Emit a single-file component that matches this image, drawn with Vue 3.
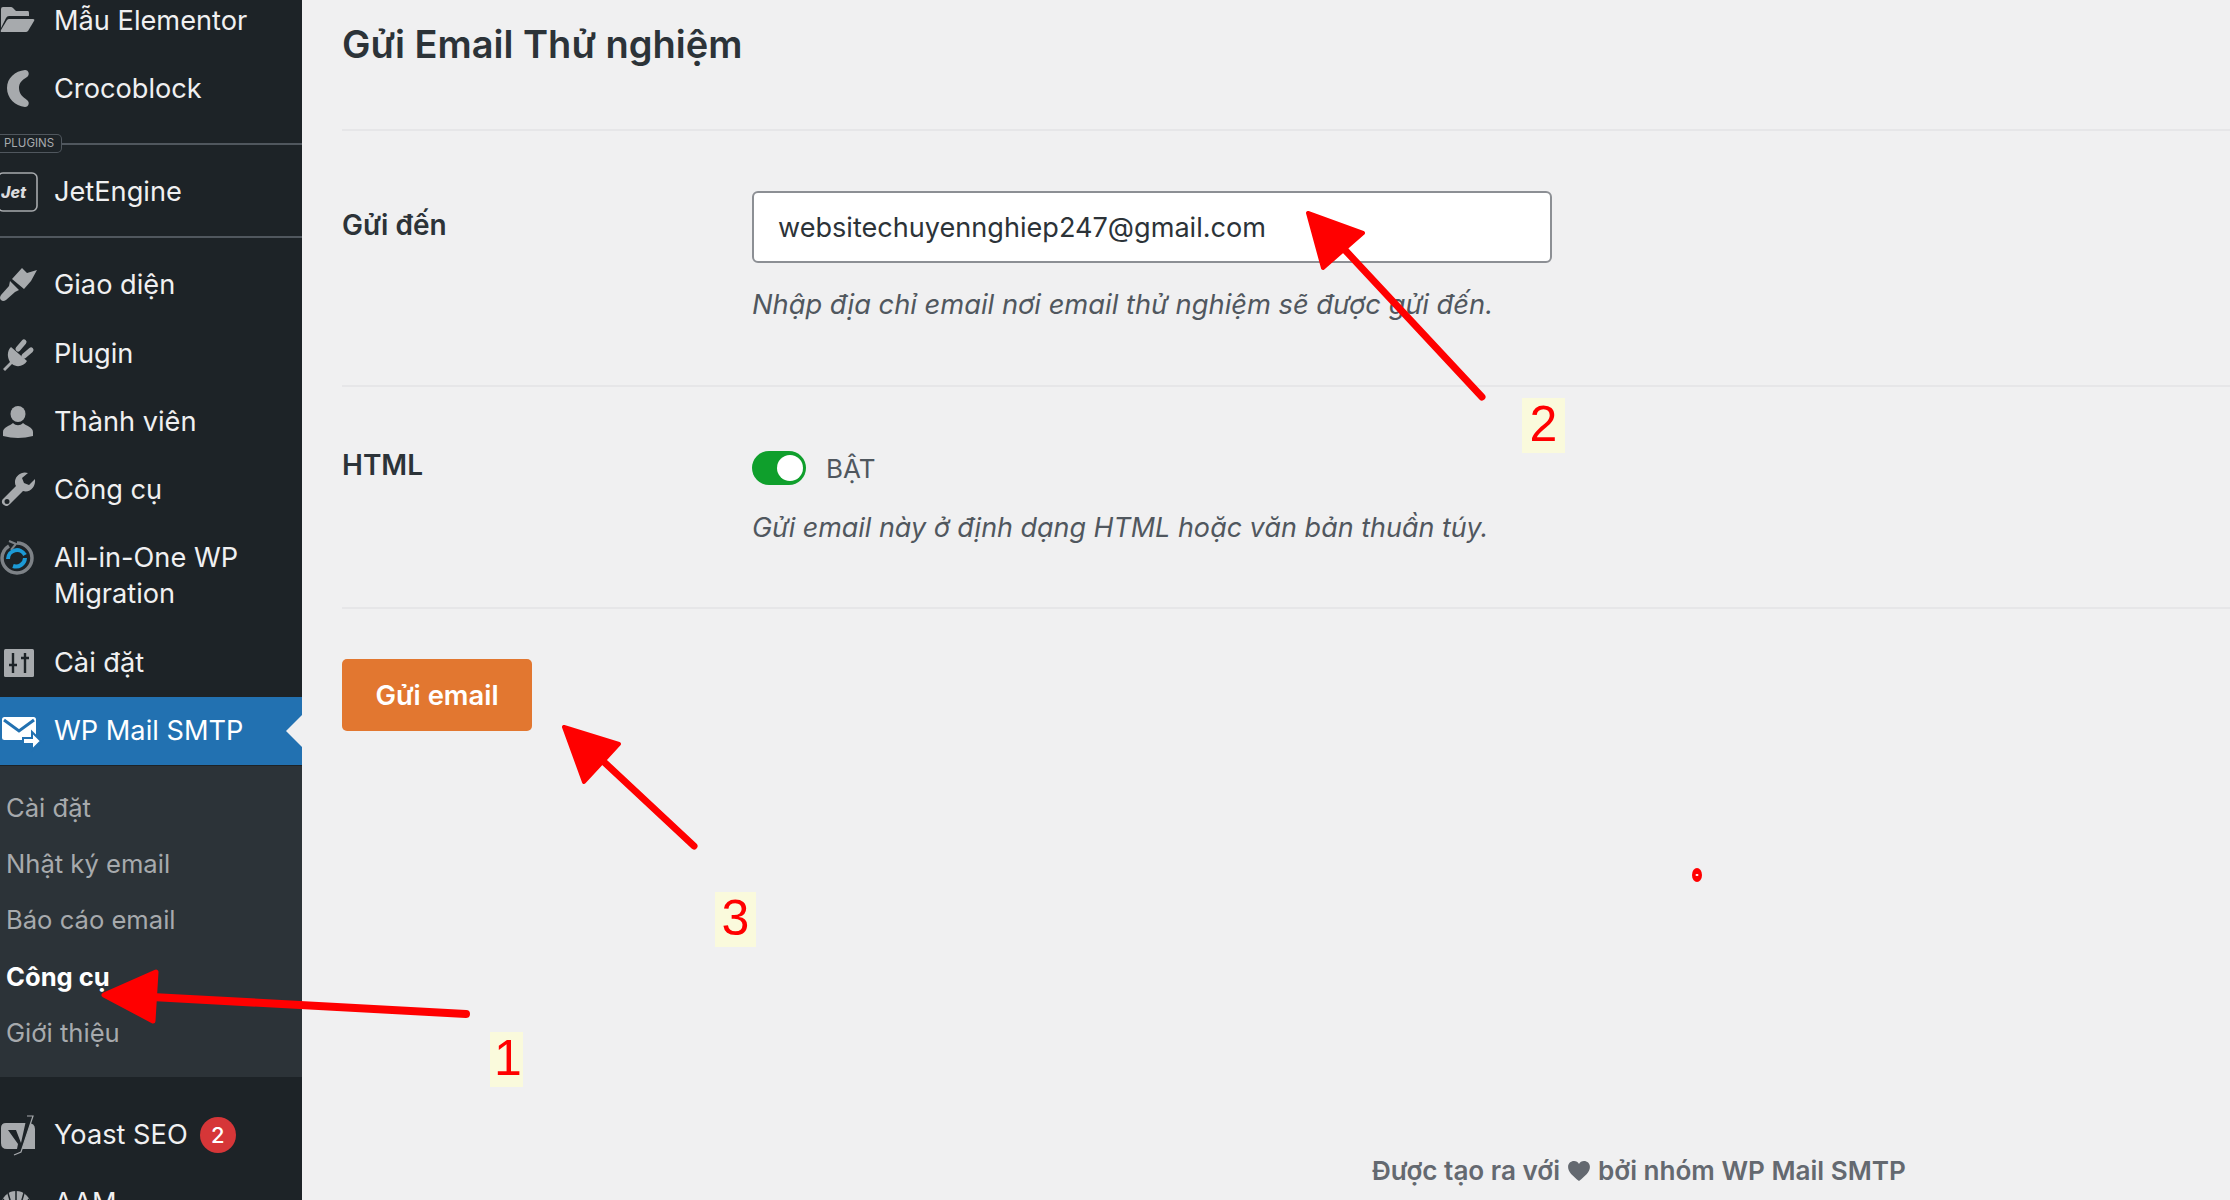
<script setup>
const topItems = [
  { label: 'Mẫu Elementor', icon: 'folder' },
  { label: 'Crocoblock', icon: 'croco' },
]
const appearance = [
  { label: 'Giao diện', icon: 'brush' },
  { label: 'Plugin', icon: 'plug' },
  { label: 'Thành viên', icon: 'user' },
  { label: 'Công cụ', icon: 'wrench' },
  { label: 'All-in-One WP Migration', icon: 'aio' },
  { label: 'Cài đặt', icon: 'settings' },
]
const submenu = [
  { label: 'Cài đặt' },
  { label: 'Nhật ký email' },
  { label: 'Báo cáo email' },
  { label: 'Công cụ', current: true },
  { label: 'Giới thiệu' },
]
const G = '#a7aaad'
</script>

<template>
  <div class="page">
    <aside class="sidebar">
      <ul class="menu">
        <li v-for="m in topItems" :key="m.label" class="item">
          <svg class="ic" viewBox="0 0 44 40">
            <g v-if="m.icon === 'folder'" :fill="G">
              <path d="M1 8q0-2 2-2h8q1 0 2 1l3 3h12q1 0 1 2v3H9q-2 0-3 2L1 27z" />
              <path d="M9 18h24q2 0 1 2l-6 10q-1 1-2 1H2q-2 0-1-2l6-10q1-1 2-1z" />
            </g>
            <path v-else :fill="G" d="M25 1c4 0 5 5 2 7-5 3-8 6-8 11 0 6 4 9 8 12 3 2 2 7-2 7C15 37 7 29 7 19 7 9 15 2 25 1z" />
          </svg>
          <span>{{ m.label }}</span>
        </li>
      </ul>

      <div class="plugins-sep"><span class="tag">PLUGINS</span><i class="sep-line"></i></div>

      <ul class="menu">
        <li class="item">
          <svg class="ic" viewBox="0 0 44 40">
            <rect x="-2" y="1" width="39" height="38" rx="5" fill="none" :stroke="G" stroke-width="1.600" />
            <text x="1" y="26" font-family="Inter, sans-serif" font-weight="800" font-style="italic" font-size="16" fill="#dcdcde">Jet</text>
          </svg>
          <span>JetEngine</span>
        </li>
      </ul>

      <div class="sep"></div>

      <ul class="menu">
        <li v-for="m in appearance" :key="m.label" class="item">
          <svg class="ic" viewBox="0 0 44 40">
            <g v-if="m.icon === 'brush'" :fill="G">
              <path d="M12 14 22 3l5 5 10-3-6 11-7 8z" />
              <path d="M10 16l9 9-4 2-9 8q-3 2-5 0t0-5l8-9z" />
            </g>
            <g v-else-if="m.icon === 'plug'" :fill="G" :stroke="G">
              <path stroke="none" d="M11 13l16 14c-3 5-10 7-15 3l-7 7-2-2 7-7c-3-5-3-11 1-15z" />
              <path fill="none" stroke-width="5" stroke-linecap="round" d="M18 15l6-7M24 22l7-6" />
            </g>
            <g v-else-if="m.icon === 'user'" :fill="G">
              <ellipse cx="18" cy="12" rx="7.500" ry="8" />
              <path d="M3 34v-4c0-5 7-6 10-9 3 3 7 3 10 0 3 3 10 4 10 9v4q-15 4-30 0z" />
            </g>
            <path v-else-if="m.icon === 'wrench'" fill-rule="evenodd" :fill="G" d="M35 9l-6 6-5-2-2-5 6-5C22 1 16 5 15 11c0 2 0 4 1 5L3 29c-2 2-1 5 1 6 2 2 4 1 6-1l13-13c7 2 13-4 12-12zM7 29a2.500 2.500 0 1 1 0 5 2.500 2.500 0 0 1 0-5z" />
            <g v-else-if="m.icon === 'aio'" fill="none">
              <path d="M17 5a15 15 0 1 1-15 15 15 15 0 0 1 7-12" stroke="#7d8287" stroke-width="3.500" />
              <path d="M9 3l7 3-5 6" stroke="#7d8287" stroke-width="2" />
              <path d="M8 21a9 9 0 0 1 17-4" stroke="#1c9ad6" stroke-width="4" />
              <path d="M25 20a9 9 0 0 1-12 8" stroke="#1c9ad6" stroke-width="4" />
            </g>
            <g v-else>
              <rect x="4" y="6" width="30" height="28" rx="1.500" :fill="G" />
              <path d="M13 10v20M9 22h8M25 10v20M21 15h8" stroke="#1d2327" stroke-width="2.400" fill="none" />
            </g>
          </svg>
          <span>{{ m.label }}</span>
        </li>

        <li class="item active">
          <svg class="ic" viewBox="0 0 44 40">
            <rect x="2" y="6" width="34" height="23" rx="2.500" fill="#fff" />
            <path d="M4 9l15 11L34 9" fill="none" stroke="#2271b1" stroke-width="3" />
            <path d="M23 27h9v-6l9 9-9 9v-6h-9z" fill="#fff" stroke="#2271b1" stroke-width="2" />
          </svg>
          <span>WP Mail SMTP</span>
          <i class="notch"></i>
        </li>
      </ul>

      <ul class="sub">
        <li v-for="s in submenu" :key="s.label" :class="['sub-item', { current: s.current }]">{{ s.label }}</li>
      </ul>

      <ul class="menu after">
        <li class="item">
          <svg class="ic" viewBox="0 0 44 40">
            <path d="M6 8h22q7 0 7 6v20H7q-6 0-6-6V13q0-5 5-5z" :fill="G" />
            <path d="M8 15h8l5 13 6-27h6L21 37l-7 3 3-6 1-5z" fill="#1d2327" />
            <path d="M27 1h6L21 37l-7 3" fill="none" stroke="#a7aaad" stroke-width="1.200" />
          </svg>
          <span>Yoast SEO</span>
          <b class="badge">2</b>
        </li>
        <li class="item">
          <svg class="ic" viewBox="0 0 44 40">
            <circle cx="16" cy="23" r="15" :fill="G" />
            <path d="M16 8v30M8 10l8 28M24 10l-8 28M3 16l13 22M29 16 16 38" stroke="#1d2327" stroke-width="1.500" />
          </svg>
          <span>AAM</span>
        </li>
      </ul>
    </aside>

    <main class="main">
      <h1 class="title">Gửi Email Thử nghiệm</h1>

      <section class="row row-to">
        <label class="label">Gửi đến</label>
        <div class="field">
          <div class="input">websitechuyennghiep247@gmail.com</div>
          <p class="help help-to">Nhập địa chỉ email nơi email thử nghiệm sẽ được gửi đến.</p>
        </div>
      </section>

      <section class="row row-html">
        <label class="label">HTML</label>
        <div class="field">
          <div class="toggle-line">
            <span class="toggle"><i class="knob"></i></span>
            <span class="toggle-text">BẬT</span>
          </div>
          <p class="help help-html">Gửi email này ở định dạng HTML hoặc văn bản thuần túy.</p>
        </div>
      </section>

      <div class="row row-submit">
        <button class="send" type="button">Gửi email</button>
      </div>

      <footer class="foot">
        Được tạo ra với
        <svg class="heart" viewBox="0 0 24 22"><path d="M12 22C5 16 0 12 0 6.500 0 2.500 3 0 6.500 0 9 0 11 1.300 12 3.300 13 1.300 15 0 17.500 0 21 0 24 2.500 24 6.500 24 12 19 16 12 22z" fill="#646970" /></svg>
        bởi nhóm WP Mail SMTP
      </footer>
    </main>

    <svg class="marks" viewBox="0 0 2230 1200">
      <g fill="#ff0000" stroke="#ff0000" stroke-linejoin="round" stroke-linecap="round">
        <path d="M466 1014 152 997" stroke-width="8" fill="none" />
        <path d="M104 995 156 972 153 1021z" stroke-width="5" />
        <path d="M1482 397 1345 250" stroke-width="7" fill="none" />
        <path d="M1308 213 1363 233 1323 268z" stroke-width="4" />
        <path d="M694 846 604 762" stroke-width="7" fill="none" />
        <path d="M564 727 619 744 584 782z" stroke-width="4" />
      </g>
      <ellipse cx="1697" cy="875" rx="5" ry="7" fill="#ff0000" />
      <ellipse cx="1697" cy="875" rx="1.500" ry="1" fill="#fff" />
    </svg>
    <span class="num n1">1</span>
    <span class="num n2">2</span>
    <span class="num n3">3</span>
  </div>
</template>

<style>
html, body { margin: 0; background: #f0f0f1; }
</style>

<style scoped>
.page {
  position: relative;
  display: flex;
  width: 2230px;
  height: 1200px;
  overflow: hidden;
  background: #f0f0f1;
  font-family: Inter, "Noto Sans", sans-serif;
}
.sidebar {
  flex: 0 0 302px;
  width: 302px;
  height: 1200px;
  overflow: hidden;
  background: #1d2327;
  color: #f0f0f1;
}
ul { list-style: none; margin: 0; padding: 0; }
.menu:first-child { margin-top: -13px; }
.item {
  position: relative;
  display: flex;
  align-items: flex-start;
  padding: 16.130px 0;
  font-size: 27.200px;
  line-height: 36px;
}
.ic {
  flex: 0 0 44px;
  width: 44px;
  height: 40px;
  margin: -2px 10px -2px 0;
  overflow: visible;
}
.item span { width: 220px; }
.active { background: #2271b1; color: #fff; }
.notch {
  position: absolute;
  right: 0;
  top: 50%;
  margin-top: -16px;
  border: 16px solid transparent;
  border-left-width: 0;
  border-right-color: #f0f0f1;
}
.plugins-sep {
  display: flex;
  align-items: center;
  height: 34px;
  padding-top: 6px;
  box-sizing: border-box;
}
.tag {
  display: block;
  box-sizing: border-box;
  width: 62px;
  height: 19px;
  border: 1px solid #50575e;
  border-left: 0;
  border-radius: 0 5px 5px 0;
  font-size: 11.500px;
  line-height: 17px;
  padding-left: 4px;
  color: #a7aaad;
  white-space: nowrap;
  overflow: hidden;
}
.sep-line { flex: 1; height: 2px; background: #50575e; }
.sep { height: 25.400px; box-sizing: border-box; padding-top: 10px; }
.sep::before { content: ""; display: block; height: 2px; background: #50575e; }
.sub {
  background: #2c3338;
  padding: 14px 0 16px;
  margin-top: 1px;
}
.sub-item {
  height: 56.300px;
  line-height: 56.300px;
  padding-left: 6px;
  font-size: 25.600px;
  color: #a7aaad;
}
.current { color: #fff; font-weight: 700; }
.after { margin-top: 23px; }
.item .badge {
  flex: none;
  width: 36px;
  height: 36px;
  border-radius: 50%;
  background: #d63638;
  color: #fff;
  font-size: 22px;
  font-weight: 500;
  line-height: 36px;
  text-align: center;
}
.item:has(.badge) span { width: auto; margin-right: 12px; }
.main {
  flex: 1;
  min-width: 0;
  padding-left: 40px;
  position: relative;
}
.title {
  margin: 0;
  height: 129px;
  box-sizing: border-box;
  padding-top: 20px;
  font-size: 38px;
  line-height: 48px;
  font-weight: 600;
  color: #2c3338;
}
.row {
  display: flex;
  box-sizing: border-box;
  border-top: 2px solid #e6e6e8;
}
.row-to { height: 256px; padding-top: 60px; }
.row-html { height: 222px; padding-top: 63px; }
.row-submit { padding-top: 50px; }
.label {
  flex: 0 0 411px;
  font-size: 28px;
  font-weight: 600;
  line-height: 36px;
  color: #2c3338;
}
.row-to .label { padding-top: 16px; }
.row-html .label { margin-top: -3px; }
.field { flex: 0 0 800px; margin-left: -1px; }
.input {
  box-sizing: border-box;
  height: 72px;
  padding-left: 24px;
  border: 2px solid #8c8f94;
  border-radius: 6px;
  background: #fff;
  color: #2c3338;
  font-size: 27.100px;
  line-height: 70px;
}
.help {
  margin: 0;
  font-style: italic;
  line-height: 36px;
  color: #50575e;
  white-space: nowrap;
}
.help-to { margin-top: 24px; font-size: 27.300px; }
.help-html { margin-top: 23px; font-size: 26.900px; }
.toggle-line { display: flex; align-items: center; gap: 20px; height: 36px; }
.toggle {
  position: relative;
  display: block;
  width: 54px;
  height: 34px;
  border-radius: 17px;
  background: #0f9f2c;
}
.knob {
  position: absolute;
  top: 4px;
  right: 3px;
  width: 26px;
  height: 26px;
  border-radius: 50%;
  background: #fff;
}
.toggle-text { font-size: 26px; line-height: 36px; color: #50575e; position: relative; top: 1px; }
.send {
  display: block;
  box-sizing: border-box;
  width: 190px;
  height: 72px;
  border: 0;
  border-radius: 5px;
  background: #e27730;
  color: #fff;
  font: 600 27.400px/36px Inter, "Noto Sans", sans-serif;
  padding: 0;
}
.foot {
  position: absolute;
  left: 1070px;
  top: 1153px;
  display: flex;
  gap: 8px;
  align-items: center;
  white-space: nowrap;
  font-size: 26.100px;
  font-weight: 600;
  line-height: 36px;
  color: #646970;
}
.heart { width: 22px; height: 20px; }
.marks {
  position: absolute;
  inset: 0;
  width: 2230px;
  height: 1200px;
  pointer-events: none;
}
.num {
  position: absolute;
  height: 55px;
  background: #fafadc;
  color: #ff0000;
  font-family: "Liberation Sans", sans-serif;
  font-size: 50px;
  line-height: 53px;
  text-align: center;
}
.n1 { left: 490px; top: 1032px; width: 33px; padding-left: 3px; box-sizing: border-box; }
.n2 { left: 1522px; top: 398px; width: 43px; }
.n3 { left: 715px; top: 892px; width: 41px; }
</style>
